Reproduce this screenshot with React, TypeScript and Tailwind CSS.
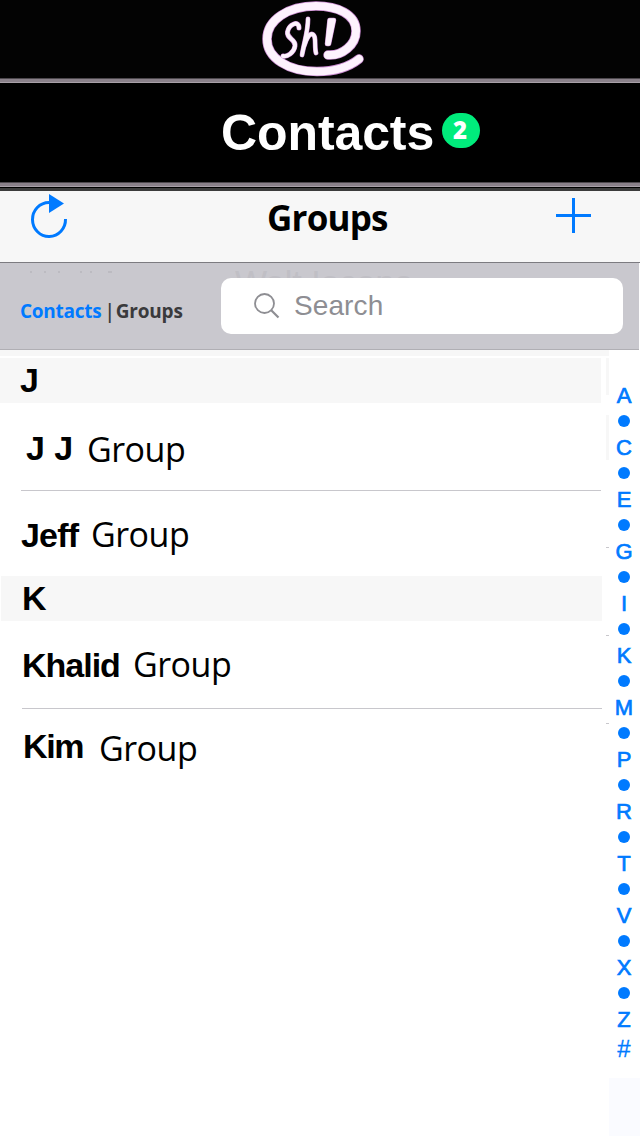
import clsx from 'clsx'

type Row = {
  name: string
  nameClass: string
  groupClass: string
  rowClass: string
}

type Section = {
  letter: string
  headerClass: string
  rows: Row[]
}

const sections: Section[] = [
  {
    letter: 'J',
    headerClass: 'h-[45px] pl-5 pt-0.5 w-[601px]',
    rows: [
      {
        name: 'J J',
        nameClass: 'w-[61px] mt-[25px]',
        groupClass: 'mt-[26px]',
        rowClass: 'h-[88px] ml-[21px] pl-[5px] w-[580px] border-b border-[#c8c7cc]',
      },
      {
        name: 'Jeff',
        nameClass: 'w-[70px] mt-[24px] tracking-[-0.8px]',
        groupClass: 'mt-[23px]',
        rowClass: 'h-[85px] ml-[21px] w-[580px]',
      },
    ],
  },
  {
    letter: 'K',
    headerClass: 'h-[45px] ml-px pl-[21px] pt-0.5 w-[601px]',
    rows: [
      {
        name: 'Khalid',
        nameClass: 'w-[110px] mt-[24px] tracking-[-1px]',
        groupClass: 'mt-[23px] ml-px',
        rowClass: 'h-[88px] ml-[22px] w-[580px] border-b border-[#c8c7cc]',
      },
      {
        name: 'Kim',
        nameClass: 'w-[77px] mt-[17px] tracking-[-1.4px] indent-px',
        groupClass: 'mt-[19px]',
        rowClass: 'h-[85px] ml-[22px] w-[580px]',
      },
    ],
  },
]

const letters = ['A', 'C', 'E', 'G', 'I', 'K', 'M', 'P', 'R', 'T', 'V', 'X', 'Z']

const ring = 'M73 55C87 56 101 45 101 31C101 14 82 6 61 6C33 6 12 20 12 39C12 58 33 71.500 62 71.500C82 71.500 94 67 104 59'
const letterS = 'M44 28C44 20 34 24 32.500 32C31.500 39 41 39 40 46C39 53 32 57 28 56'
const letterH = 'M53 19C53 32 49 42 47 55C49 44 53 34 57 34C62 35 59 46 61 53'
const bang = 'M74.500 20L79 20L74 44L72 44Z'

function Logo() {
  return (
    <svg width="112" height="78" viewBox="0 0 112 78" fill="none" stroke="#fdf2fd" strokeLinecap="round" strokeLinejoin="round">
      <g stroke="#c98ad0">
        <path d={ring} strokeWidth="9.5" />
        <path d={letterS} strokeWidth="5" />
        <path d={letterH} strokeWidth="4.8" />
        <path d={bang} strokeWidth="4.500" />
      </g>
      <path d={ring} strokeWidth="8" />
      <path d={letterS} strokeWidth="4" />
      <path d={letterH} strokeWidth="3.8" />
      <path d={bang} fill="#fdf2fd" strokeWidth="3.500" />
    </svg>
  )
}

function Divider() {
  return <div className="h-[5px] shrink-0 border-t border-b border-t-[#4d484d] border-b-[#a8a0a8] bg-[#8a818a]" />
}

function NavBar() {
  return (
    <div className="flex h-[72px] border-b border-[#7c7b80] bg-[#f7f7f7] pl-[30px]">
      <svg width="40" height="52" viewBox="0 0 40 52" className="text-[#007aff]">
        <path d="M19 11.500A16.500 17 0 1 0 35.500 28" fill="none" stroke="currentColor" strokeWidth="3" />
        <path d="M19 3L34 12.500L19 22Z" fill="currentColor" />
      </svg>
      <h2 className="mt-[7px] ml-[197px] h-10 w-[289px] font-['Open_Sans','Noto_Sans',sans-serif] text-[35px] font-bold leading-10 tracking-[-0.8px] text-black">
        Groups
      </h2>
      <svg width="35" height="52" viewBox="0 0 35 52">
        <path d="M0 24.500H35M17.500 7V42" stroke="#007aff" strokeWidth="3" />
      </svg>
    </div>
  )
}

function SearchBar() {
  return (
    <div className="relative flex h-[87px] w-[639px] border-b border-[#b0afb4] bg-[#c9c8ce]">
      {/* rows scrolled under the translucent bar */}
      <div className="absolute left-[235px] top-[7px] h-2 overflow-hidden whitespace-pre font-['Liberation_Sans',sans-serif] text-[34px] leading-6 text-[#c0bfc5]">
        Walt Iacono
      </div>
      <div className="absolute left-[30px] top-2 flex h-0.5 gap-3">
        <i className="w-0.5 bg-[#bcbbc1]" />
        <i className="w-0.5 bg-[#bcbbc1]" />
        <i className="w-0.5 bg-[#bcbbc1]" />
        <i className="ml-2 w-0.5 bg-[#bcbbc1]" />
        <i className="-ml-1 w-0.5 bg-[#bcbbc1]" />
        <i className="ml-1 w-1 bg-[#bcbbc1]" />
      </div>
      <div className="mt-[34px] h-7 w-[221px] shrink-0 whitespace-pre pl-5 font-['Open_Sans','Noto_Sans',sans-serif] text-[19px] font-bold leading-7 tracking-[-0.25px] text-[#3a3a3c]">
        <span className="text-[#007aff]">Contacts</span>
        <span className="ml-[3px] font-semibold">|</span>
        <span className="ml-px tracking-[-0.2px]">Groups</span>
      </div>
      <div className="mt-[15px] flex h-14 w-[402px] items-center rounded-[10px] bg-white pl-8">
        <svg width="28" height="28" viewBox="0 0 28 28" fill="none" stroke="#8e8e93" strokeWidth="1.8">
          <circle cx="11.500" cy="11.500" r="9.500" />
          <path d="M18 18L25.500 25.500" strokeWidth="2.2" />
        </svg>
        <span className="ml-[13px] font-['Liberation_Sans',sans-serif] text-[28px] leading-8 tracking-[0.1px] text-[#8e8e93]">
          Search
        </span>
      </div>
    </div>
  )
}

function SectionList() {
  return (
    <div className="w-[606px] font-['Liberation_Sans',sans-serif] text-[34px] leading-10 text-black">
      {sections.map((section) => (
        <section key={section.letter}>
          <h3 className={clsx('bg-[#f7f7f7] font-bold', section.headerClass)}>{section.letter}</h3>
          {section.rows.map((row) => (
            <div key={row.name} className={clsx('flex', row.rowClass)}>
              <span className={clsx('shrink-0 font-bold', row.nameClass)}>{row.name}</span>
              <span className={clsx("font-['Open_Sans','Noto_Sans',sans-serif] tracking-[-0.5px]", row.groupClass)}>
                Group
              </span>
            </div>
          ))}
        </section>
      ))}
    </div>
  )
}

function LetterIndex() {
  return (
    <div className="flex w-[30px] flex-col items-center pt-6 font-['Liberation_Sans',sans-serif] text-[22px] leading-[26px] text-[#007aff] [-webkit-text-stroke:0.7px_#007aff]">
      {letters.map((letter, i) => (
        <div key={letter} className="flex w-5 flex-col items-center">
          <span className="h-[26px] leading-7">{letter}</span>
          {i < letters.length - 1 && (
            <span className="flex h-[26px] items-center">
              <i className="size-3 rounded-full bg-[#007aff]" />
            </span>
          )}
        </div>
      ))}
      <span className="mt-[3px] h-[26px] text-2xl leading-7 [-webkit-text-stroke:0.3px_#007aff]">#</span>
    </div>
  )
}

export default function App() {
  return (
    <div className="h-[1136px] w-[640px] overflow-hidden bg-white">
      <div className="flex h-[78px] bg-[#030303] pl-[255px]">
        <Logo />
      </div>
      <Divider />
      <div className="flex h-[99px] bg-black pl-[221px]">
        <h1 className="mt-[22px] w-[213px] font-['Liberation_Sans',sans-serif] text-[50px] font-bold leading-[56px] tracking-[-0.1px] text-white">
          Contacts
        </h1>
        <span className="ml-[8px] mt-[30px] flex h-[35px] w-[38px] items-center justify-center rounded-[18px] bg-[#00ec7c] pr-0.5 pb-0.5 font-['Open_Sans','Noto_Sans',sans-serif] text-2xl font-extrabold text-white">
          2
        </span>
      </div>
      <Divider />
      <div className="h-1 border-t border-black bg-[#3c3c3c]" />
      <NavBar />
      <SearchBar />
      <div className="flex h-[786px]">
        <div className="w-[609px]">
          <div className="mb-0.5 h-1.5 bg-[#f7f7f7]" />
          <div className="flex">
            <SectionList />
            <div className="w-[3px]">
              <div className="h-[37px] bg-[#f7f7f7]" />
              <div className="mt-5 h-[45px] bg-[#f7f7f7]" />
              <div className="mt-[87px] h-px bg-[#c8c7cc]" />
              <div className="mt-[87px] h-px bg-[#c8c7cc]" />
              <div className="mt-[87px] h-px bg-[#c8c7cc]" />
            </div>
          </div>
        </div>
        <div className="w-[31px]">
          <div className="h-[728px] pt-2">
            <LetterIndex />
          </div>
          <div className="h-[58px] bg-[#fafbff]" />
        </div>
      </div>
    </div>
  )
}
